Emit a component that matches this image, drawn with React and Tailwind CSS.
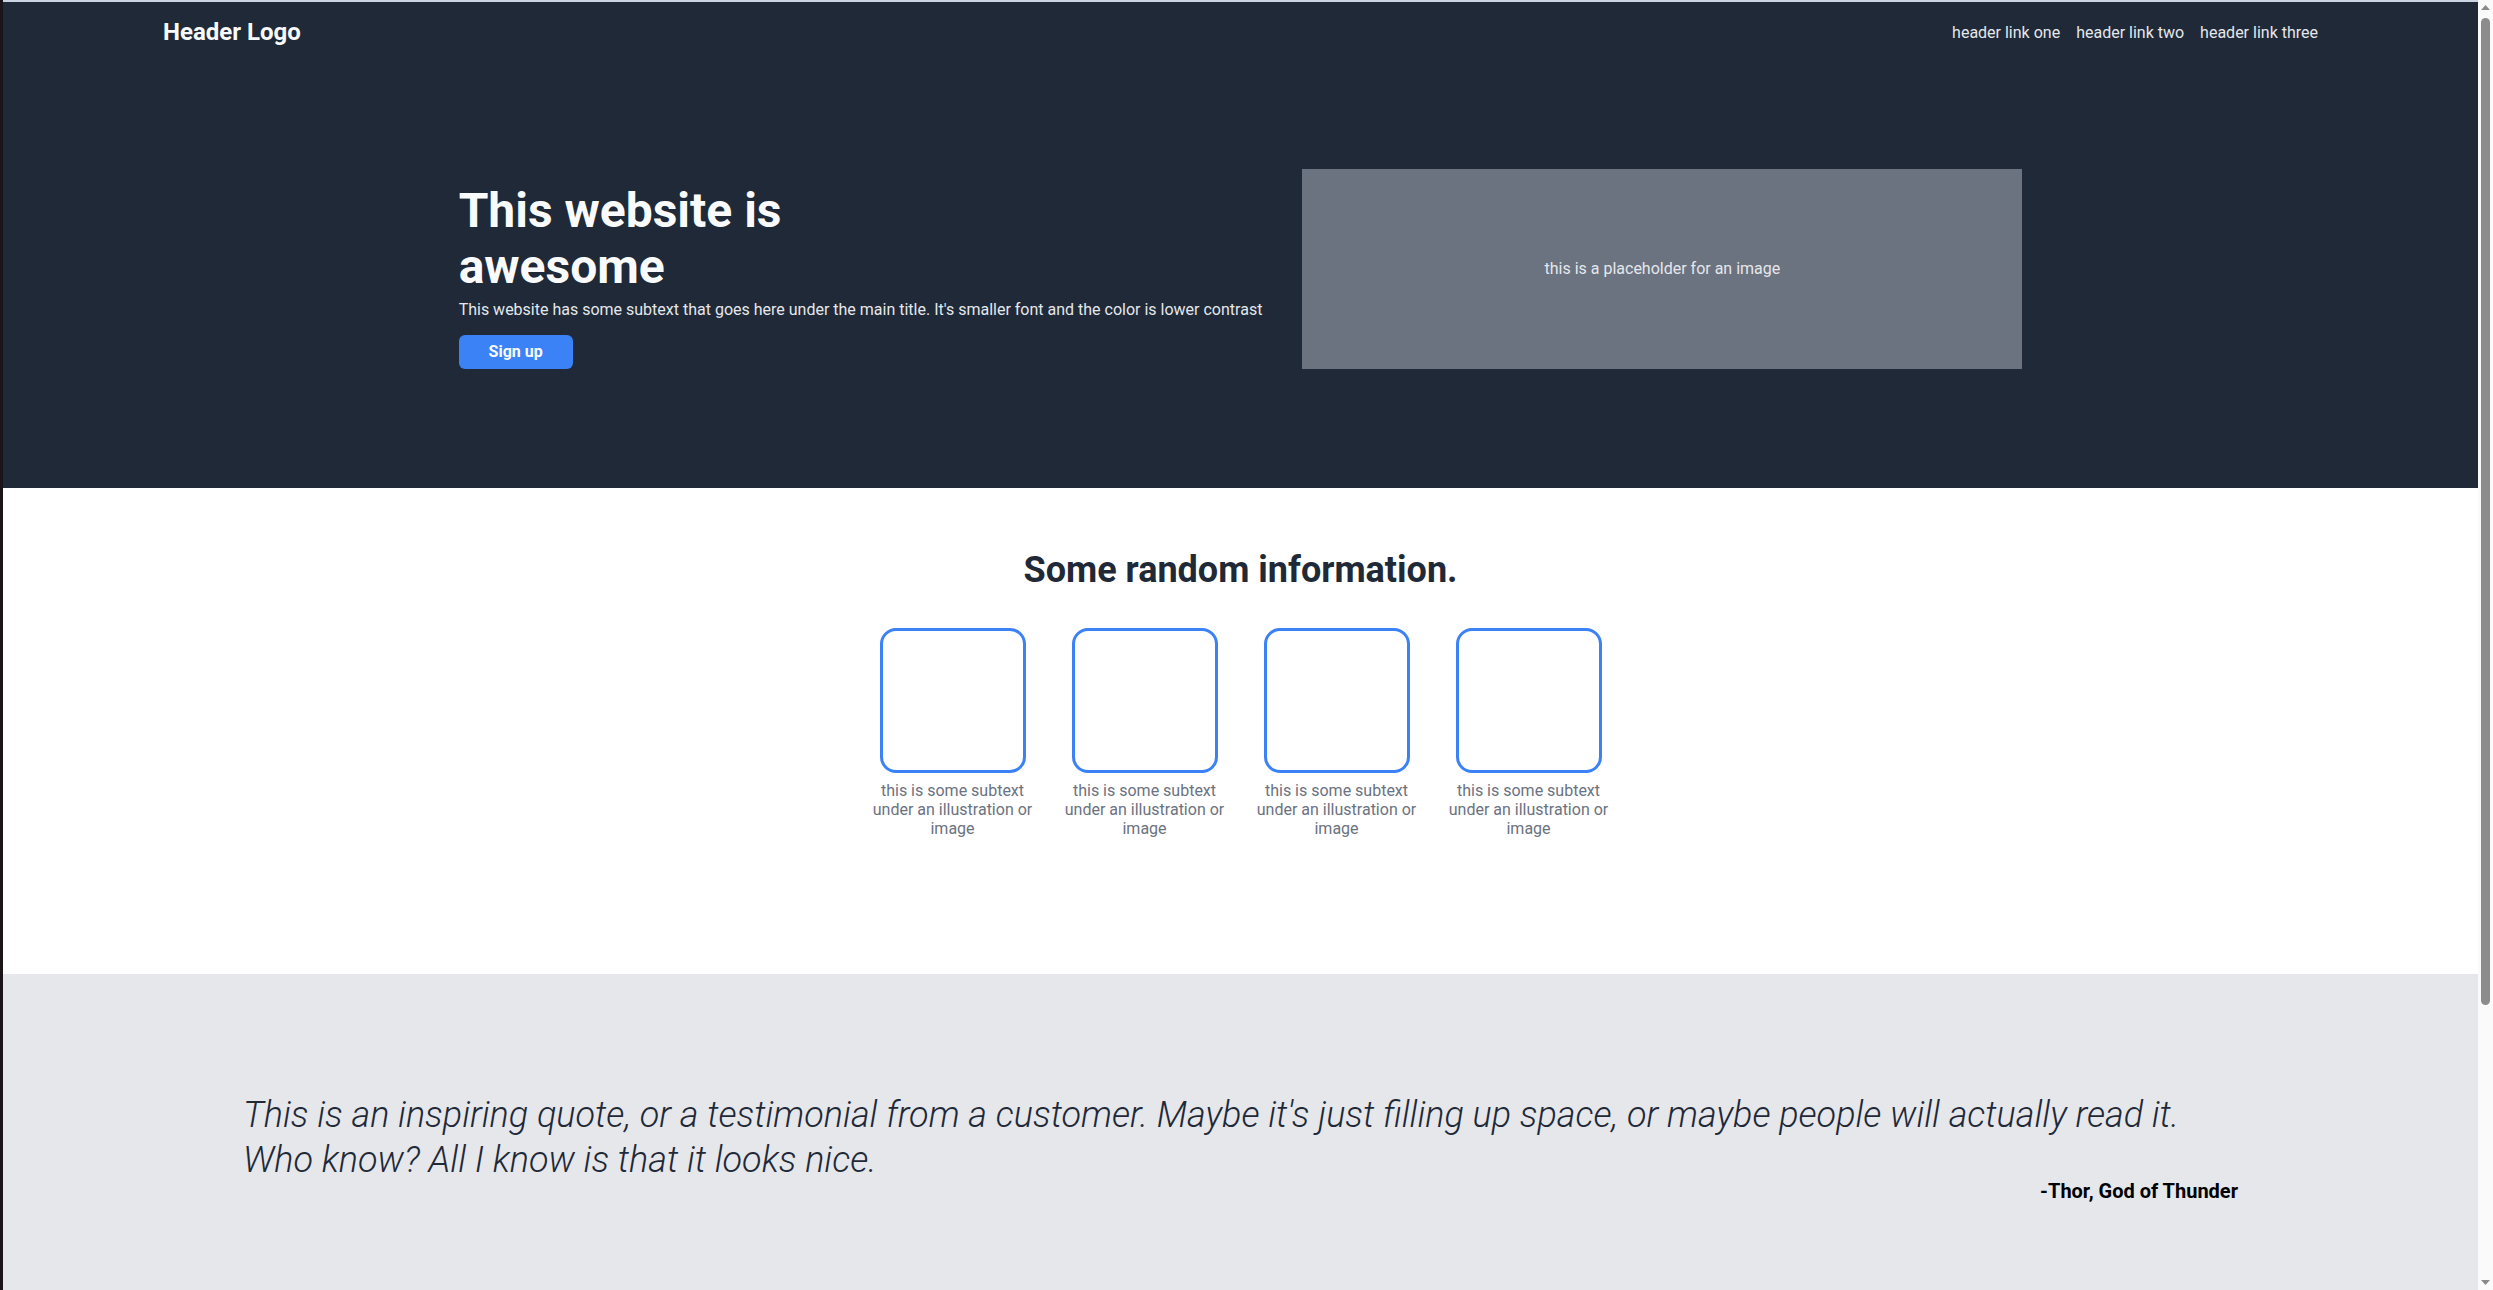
export default function App() {
  const cards = [1, 2, 3, 4];
  return (
    <div className="flex items-start border-l-[3px] border-[#1b1519] font-['Roboto','Liberation_Sans',sans-serif] leading-[normal]">
      <main className="flex-1 min-w-0">
        <div className="bg-[#1f2937] border-t-2 border-[#cbd5e1]">
          <header className="h-[60px] px-40 flex items-center justify-between">
            <div className="text-2xl leading-[28px] font-bold text-[#f9fafb]">Header Logo</div>
            <nav className="flex gap-4 text-base leading-[19px] text-[#e5e7eb]">
              <a href="#">header link one</a>
              <a href="#">header link two</a>
              <a href="#">header link three</a>
            </nav>
          </header>
          <section className="pt-[107px] pb-[119px] flex justify-center items-end gap-10">
            <div className="flex flex-col items-start">
              <h1 className="max-w-[420px] text-[48px] leading-[56px] font-bold text-[#f9fafb]">
                This website is awesome
              </h1>
              <p className="mt-[5px] text-base leading-[19px] text-[#e5e7eb] whitespace-nowrap">
                This website has some subtext that goes here under the main title. It's smaller font and the color is lower contrast
              </p>
              <button className="mt-4 h-[34px] w-[114px] rounded-md bg-[#3b82f6] text-base font-bold text-[#f9fafb]">
                Sign up
              </button>
            </div>
            <div className="w-[720px] h-[200px] bg-[#6b7280] flex items-center justify-center text-base text-[#e5e7eb]">
              this is a placeholder for an image
            </div>
          </section>
        </div>

        <section className="bg-white pt-[61px] pb-[136px] flex flex-col items-center">
          <h2 className="text-[36px] leading-[42px] font-bold text-[#1f2937]">Some random information.</h2>
          <div className="mt-[37px] flex gap-8">
            {cards.map((i) => (
              <div key={i} className="w-40 flex flex-col items-center">
                <div className="w-[146px] h-[145px] rounded-2xl border-[3px] border-[#3b82f6]" />
                <p className="mt-2 w-[166px] shrink-0 text-center text-base leading-[19px] text-[#6b7280]">
                  this is some subtext under an illustration or image
                </p>
              </div>
            ))}
          </div>
        </section>

        <section className="bg-[#e5e7eb] pt-[119px] pb-[444px] px-60">
          <p className="text-[36px] leading-[45px] font-light italic text-[#1f2937]">
            This is an inspiring quote, or a testimonial from a customer. Maybe it's just filling up space, or maybe people will actually read it.
            <br />
            Who know? All I know is that it looks nice.
          </p>
          <p className="-mt-[3px] text-right text-xl leading-[23px] font-bold text-black">-Thor, God of Thunder</p>
        </section>
      </main>

      <aside className="sticky top-0 h-screen w-[15px] shrink-0 bg-[#fafafa] flex flex-col items-center">
        <div className="h-[15px] w-full flex items-center justify-center">
          <svg width="9" height="5" viewBox="0 0 9 5">
            <path d="M0 5 L4.5 0 L9 5 Z" fill="#8a8a8a" />
          </svg>
        </div>
        <div className="mt-[3px] w-[9px] h-[987px] rounded-full bg-[#8c8c8c]" />
        <div className="flex-1" />
        <div className="h-[15px] w-full flex items-center justify-center">
          <svg width="9" height="5" viewBox="0 0 9 5">
            <path d="M0 0 L9 0 L4.5 5 Z" fill="#8a8a8a" />
          </svg>
        </div>
      </aside>
    </div>
  );
}
